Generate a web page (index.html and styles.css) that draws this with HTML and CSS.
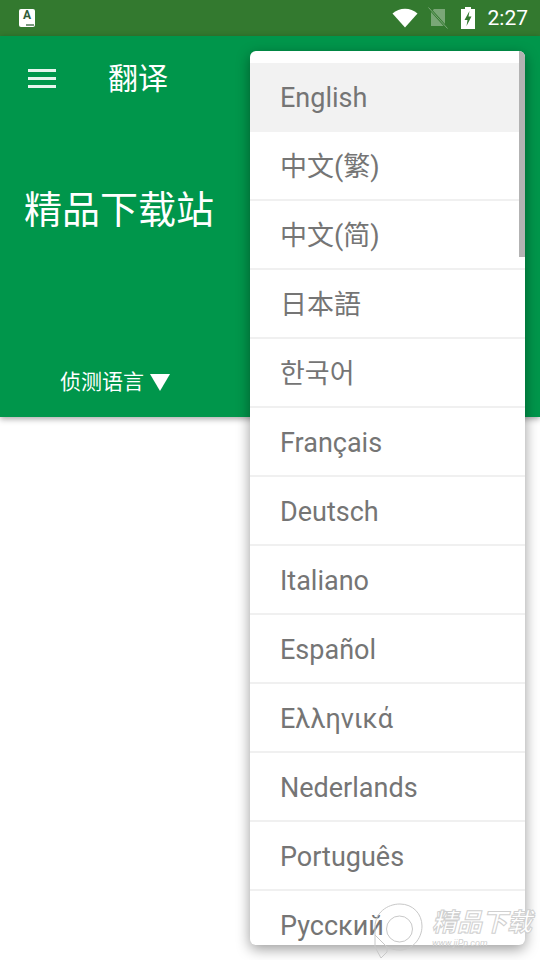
FILE: index.html
```html
<!DOCTYPE html>
<html lang="en">
<head>
    <meta charset="UTF-8">
    <meta name="viewport" content="width=device-width, initial-scale=1.0">
    <title>翻译</title>
    <link rel="stylesheet" href="styles.css">
</head>
<body>
<div class="screen">
    <!-- Status bar -->
    <div class="status-bar">
        <div class="app-badge">
            <span class="app-badge-letter">A</span>
            <span class="app-badge-foot"></span>
        </div>
        <div class="status-icons">
            <svg class="icon-wifi" width="26" height="20" viewBox="0 0 26 20"><path d="M0.500 5.500C4 2.400 8.300 0.800 13 0.800s9 1.600 12.500 4.700L13 19.500z" fill="#fff"/></svg>
            <svg class="icon-sim" width="20" height="22" viewBox="0 0 20 22">
                <path d="M6 2h11v17H3V5z" fill="#fff" fill-opacity="0.35"/>
                <path d="M1 1l18 20" stroke="#33792f" stroke-width="2.500"/>
                <path d="M0.500 0.500l19 21" stroke="#fff" stroke-opacity="0.35" stroke-width="1"/>
            </svg>
            <svg class="icon-battery" width="14" height="22" viewBox="0 0 14 22"><path d="M4 0h6v2h4v20H0V2h4z" fill="#fff"/><path d="M8.500 4L3.500 13h3l-1 6 5-9.500h-3z" fill="#33792f"/></svg>
            <span class="clock">2:27</span>
        </div>
    </div>

    <!-- Green translate panel -->
    <header class="panel">
        <div class="toolbar">
            <div class="menu-button">
                <span></span><span></span><span></span>
            </div>
            <div class="toolbar-title">翻译</div>
        </div>
        <div class="source-text">精品下载站</div>
        <div class="lang-picker">侦测语言 <span class="lang-arrow"></span></div>
    </header>

    <!-- Language dropdown -->
    <div class="lang-menu">
        <ul class="lang-list">
            <li class="selected">English</li>
            <li>中文(繁)</li>
            <li>中文(简)</li>
            <li>日本語</li>
            <li>한국어</li>
            <li>Français</li>
            <li>Deutsch</li>
            <li>Italiano</li>
            <li>Español</li>
            <li>Ελληνικά</li>
            <li>Nederlands</li>
            <li>Português</li>
            <li>Русский</li>
        </ul>
        <div class="scroll-thumb"></div>
    </div>

    <!-- Site watermark -->
    <div class="watermark">
        <svg class="watermark-logo" width="50" height="56" viewBox="0 0 50 56" fill="none" stroke="#c8c8c8" stroke-width="1">
            <path d="M2 44V24C2 10 14 1 27 1C40 1 49 11 49 23C49 36 39 47 27 47C22 47 18 46 14 44V49L8 55L2 44z"/>
            <circle cx="26.500" cy="26" r="13"/>
            <path d="M2 32L14 44"/>
        </svg>
        <div class="watermark-text">
            <div class="watermark-name">精品下载</div>
            <div class="watermark-url">www.jiPp.com</div>
        </div>
    </div>
</div>
</body>
</html>
```

FILE: styles.css
```css
* {
    box-sizing: border-box;
}

html, body {
    margin: 0;
    padding: 0;
}

body {
    font-family: 'Roboto', 'Noto Sans CJK SC', sans-serif;
    background: #fff;
}

.screen {
    position: relative;
    width: 540px;
    height: 960px;
    overflow: hidden;
    background: #fff;
}

.status-bar {
    height: 36px;
    background: #33792f;
    display: flex;
    justify-content: space-between;
    align-items: center;
    padding: 0 12px 0 19px;
}

.app-badge {
    position: relative;
    width: 16px;
    height: 18px;
    margin-top: -1px;
    background: #fff;
    border-radius: 2px;
    text-align: center;
}

.app-badge-letter {
    display: block;
    font-size: 12px;
    line-height: 13px;
    font-weight: 700;
    color: #2f5d3a;
}

.app-badge-foot {
    position: absolute;
    right: 1px;
    bottom: 1px;
    width: 8px;
    height: 2px;
    background: #7a9a80;
}

.status-icons {
    display: flex;
    align-items: center;
    color: #fff;
}

.icon-wifi {
    margin-right: 10px;
}

.icon-sim {
    margin-right: 13px;
}

.icon-battery {
    margin-right: 13px;
}

.clock {
    font-size: 21px;
    line-height: 22px;
}

.panel {
    height: 381px;
    background: #00964b;
    box-shadow: 0 2px 6px rgba(0, 0, 0, 0.35);
    color: #fff;
    display: flex;
    flex-direction: column;
}

.toolbar {
    height: 84px;
    display: flex;
    align-items: center;
}

.menu-button {
    width: 28px;
    margin-left: 28px;
    display: flex;
    flex-direction: column;
    gap: 5px;
}

.menu-button span {
    display: block;
    height: 3px;
    background: #fff;
    opacity: 0.9;
}

.toolbar-title {
    margin: 2px 0 0 52px;
    font-size: 30px;
    line-height: 84px;
}

.source-text {
    margin: 64px 0 0 24px;
    font-size: 38px;
    line-height: 52px;
}

.lang-picker {
    margin: 132px 0 0 60px;
    font-size: 21px;
    line-height: 28px;
    display: flex;
    align-items: center;
    gap: 6px;
}

.lang-arrow {
    width: 0;
    height: 0;
    border-left: 10px solid transparent;
    border-right: 10px solid transparent;
    border-top: 17px solid #fff;
}

.lang-menu {
    position: absolute;
    left: 250px;
    top: 51px;
    width: 275px;
    height: 894px;
    overflow: hidden;
    background: #fff;
    border-radius: 6px;
    box-shadow: 0 4px 14px rgba(0, 0, 0, 0.4);
}

.lang-list {
    list-style: none;
    margin: 0;
    padding: 12px 0 0;
}

.lang-list li {
    height: 69px;
    padding: 5px 0 0 30px;
    font-size: 27px;
    line-height: 61px;
    color: #757575;
    border-bottom: 2px solid #f0f0f0;
}

.lang-list li.selected {
    background: #f2f2f2;
    border-bottom-color: #f2f2f2;
}

.scroll-thumb {
    position: absolute;
    right: 0;
    top: 0;
    width: 6px;
    height: 206px;
    background: #b3b3b3;
}

.watermark {
    position: absolute;
    left: 373px;
    top: 903px;
    display: flex;
    align-items: flex-start;
    color: #fff;
    pointer-events: none;
}

.watermark-logo {
    flex: none;
}

.watermark-text {
    margin: 5px 0 0 9px;
}

.watermark-name {
    font-size: 25px;
    line-height: 30px;
    font-weight: 700;
    font-style: italic;
    color: #fff;
    -webkit-text-stroke: 1px #d0d0d0;
    white-space: nowrap;
}

.watermark-url {
    font-size: 9px;
    line-height: 10px;
    color: #d0d0d0;
    font-style: italic;
}
```
